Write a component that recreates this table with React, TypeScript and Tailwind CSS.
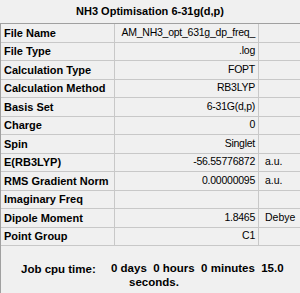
const rows: [string, string, string][] = [
  ['File Name', 'AM_NH3_opt_631g_dp_freq_', ''],
  ['File Type', '.log', ''],
  ['Calculation Type', 'FOPT', ''],
  ['Calculation Method', 'RB3LYP', ''],
  ['Basis Set', '6-31G(d,p)', ''],
  ['Charge', '0', ''],
  ['Spin', 'Singlet', ''],
  ['E(RB3LYP)', '-56.55776872', 'a.u.'],
  ['RMS Gradient Norm', '0.00000095', 'a.u.'],
  ['Imaginary Freq', '', ''],
  ['Dipole Moment', '1.8465', 'Debye'],
  ['Point Group', 'C1', ''],
]

export default function App() {
  return (
    <div className="w-[300px] h-[293px] bg-[#f0f0f0] text-black text-[11px] font-['Liberation_Sans',Arial,sans-serif] overflow-hidden">
      <div className="h-[23px] flex items-center justify-center font-bold text-[11px]">
        NH3 Optimisation 6-31g(d,p)
      </div>

      <div className="border-t border-l border-[#a0a0a0]">
        {rows.map(([label, value, unit]) => (
          <div key={label} className="flex h-[18.5px] border-b border-[#c8c8c8]">
            <div className="w-[114px] border-r border-[#c8c8c8] pl-[3px] font-bold flex items-center whitespace-nowrap overflow-hidden">
              {label}
            </div>
            <div className="w-[144px] border-r border-[#c8c8c8] pr-[3px] flex items-center justify-end whitespace-nowrap text-[10.5px] tracking-[-0.25px]">
              {value}
            </div>
            <div className="flex-1 pl-[6px] flex items-center whitespace-nowrap text-[10.5px]">{unit}</div>
          </div>
        ))}
      </div>

      <div className="h-[48px] border-l border-[#a0a0a0] flex pt-[15px] font-bold text-[11.5px]">
        <div className="w-[110px] pl-[20px] whitespace-nowrap">Job cpu time:</div>
        <div className="flex-1 leading-[14px]">
          <div className="whitespace-pre">0 days  0 hours  0 minutes  15.0</div>
          <div className="pl-[18px]">seconds.</div>
        </div>
      </div>
    </div>
  )
}
